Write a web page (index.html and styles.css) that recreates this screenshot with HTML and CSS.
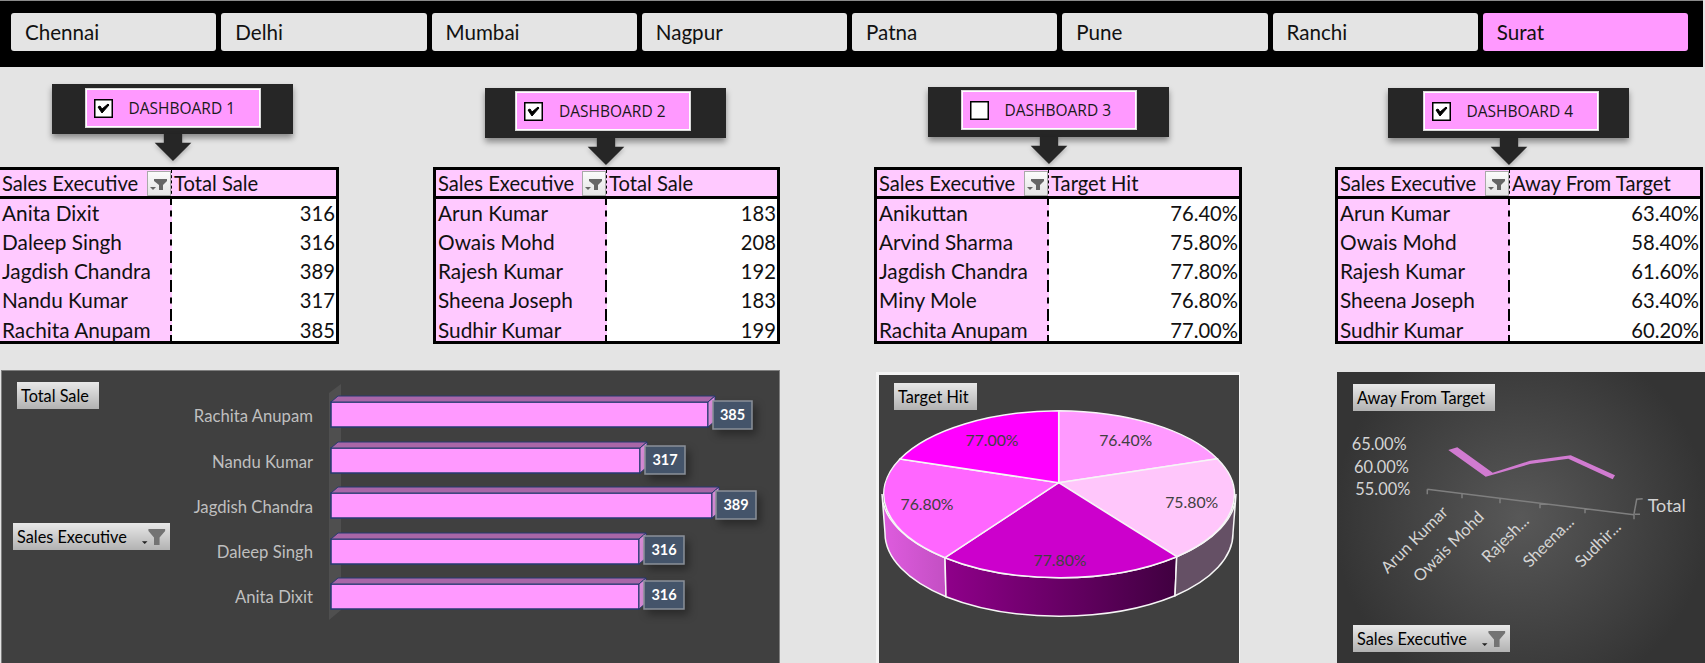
FILE: index.html
```html
<!DOCTYPE html>
<html lang="en">
<head>
    <meta charset="UTF-8">
    <meta name="viewport" content="width=device-width, initial-scale=1.0">
    <title>Sales Dashboard</title>
    <link rel="stylesheet" href="styles.css">
</head>
<body>
    <!-- City slicer -->
    <div class="slicer">
        <div class="slicer-item">Chennai</div>
        <div class="slicer-item">Delhi</div>
        <div class="slicer-item">Mumbai</div>
        <div class="slicer-item">Nagpur</div>
        <div class="slicer-item">Patna</div>
        <div class="slicer-item">Pune</div>
        <div class="slicer-item">Ranchi</div>
        <div class="slicer-item active">Surat</div>
    </div>

    <div class="sheet">
        <!-- Dashboard 1 -->
        <section class="col col-1">
            <div class="callout-area">
                <div class="callout">
                    <div class="callout-box">
                        <div class="toggle">
                            <svg class="check" viewBox="0 0 19 19"><rect x="0.75" y="0.75" width="17.5" height="17.5" fill="#fff" stroke="#000" stroke-width="1.5"/><polygon points="4,8 6,7 8,10 14,5 15,6 8,14"/></svg>
                            <span>DASHBOARD 1</span>
                        </div>
                    </div>
                    <svg class="arrow" viewBox="0 0 38 28"><path d="M9.5 0h19v9h9.5L19 28 0 9h9.5z" fill="#262626"/></svg>
                </div>
            </div>
            <table class="pivot">
                <tr>
                    <th class="name-col"><div class="th-inner">Sales Executive<span class="filter-btn"><svg viewBox="0 0 22 23"><path d="M6 7h13v2l-4 4v5h-4v-5l-5-4z" fill="#666"/><path d="M2 15h6l-3 3z" fill="#666"/></svg></span></div></th>
                    <th>Total Sale</th>
                </tr>
                <tr><td class="name-col">Anita Dixit</td><td class="num">316</td></tr>
                <tr><td class="name-col">Daleep Singh</td><td class="num">316</td></tr>
                <tr><td class="name-col">Jagdish Chandra</td><td class="num">389</td></tr>
                <tr><td class="name-col">Nandu Kumar</td><td class="num">317</td></tr>
                <tr><td class="name-col">Rachita Anupam</td><td class="num">385</td></tr>
            </table>
        </section>

        <!-- Dashboard 2 -->
        <section class="col col-2">
            <div class="callout-area">
                <div class="callout">
                    <div class="callout-box">
                        <div class="toggle">
                            <svg class="check" viewBox="0 0 19 19"><rect x="0.75" y="0.75" width="17.5" height="17.5" fill="#fff" stroke="#000" stroke-width="1.5"/><polygon points="4,8 6,7 8,10 14,5 15,6 8,14"/></svg>
                            <span>DASHBOARD 2</span>
                        </div>
                    </div>
                    <svg class="arrow" viewBox="0 0 38 28"><path d="M9.5 0h19v9h9.5L19 28 0 9h9.5z" fill="#262626"/></svg>
                </div>
            </div>
            <table class="pivot">
                <tr>
                    <th class="name-col"><div class="th-inner">Sales Executive<span class="filter-btn"><svg viewBox="0 0 22 23"><path d="M6 7h13v2l-4 4v5h-4v-5l-5-4z" fill="#666"/><path d="M2 15h6l-3 3z" fill="#666"/></svg></span></div></th>
                    <th>Total Sale</th>
                </tr>
                <tr><td class="name-col">Arun Kumar</td><td class="num">183</td></tr>
                <tr><td class="name-col">Owais Mohd</td><td class="num">208</td></tr>
                <tr><td class="name-col">Rajesh Kumar</td><td class="num">192</td></tr>
                <tr><td class="name-col">Sheena Joseph</td><td class="num">183</td></tr>
                <tr><td class="name-col">Sudhir Kumar</td><td class="num">199</td></tr>
            </table>
        </section>

        <!-- Dashboard 3 -->
        <section class="col col-3">
            <div class="callout-area">
                <div class="callout">
                    <div class="callout-box">
                        <div class="toggle">
                            <svg class="check" viewBox="0 0 19 19"><rect x="0.75" y="0.75" width="17.5" height="17.5" fill="#fff" stroke="#000" stroke-width="1.5"/></svg>
                            <span>DASHBOARD 3</span>
                        </div>
                    </div>
                    <svg class="arrow" viewBox="0 0 38 28"><path d="M9.5 0h19v9h9.5L19 28 0 9h9.5z" fill="#262626"/></svg>
                </div>
            </div>
            <table class="pivot">
                <tr>
                    <th class="name-col"><div class="th-inner">Sales Executive<span class="filter-btn"><svg viewBox="0 0 22 23"><path d="M6 7h13v2l-4 4v5h-4v-5l-5-4z" fill="#666"/><path d="M2 15h6l-3 3z" fill="#666"/></svg></span></div></th>
                    <th>Target Hit</th>
                </tr>
                <tr><td class="name-col">Anikuttan</td><td class="num">76.40%</td></tr>
                <tr><td class="name-col">Arvind Sharma</td><td class="num">75.80%</td></tr>
                <tr><td class="name-col">Jagdish Chandra</td><td class="num">77.80%</td></tr>
                <tr><td class="name-col">Miny Mole</td><td class="num">76.80%</td></tr>
                <tr><td class="name-col">Rachita Anupam</td><td class="num">77.00%</td></tr>
            </table>
        </section>

        <!-- Dashboard 4 -->
        <section class="col col-4">
            <div class="callout-area">
                <div class="callout">
                    <div class="callout-box">
                        <div class="toggle">
                            <svg class="check" viewBox="0 0 19 19"><rect x="0.75" y="0.75" width="17.5" height="17.5" fill="#fff" stroke="#000" stroke-width="1.5"/><polygon points="4,8 6,7 8,10 14,5 15,6 8,14"/></svg>
                            <span>DASHBOARD 4</span>
                        </div>
                    </div>
                    <svg class="arrow" viewBox="0 0 38 28"><path d="M9.5 0h19v9h9.5L19 28 0 9h9.5z" fill="#262626"/></svg>
                </div>
            </div>
            <table class="pivot">
                <tr>
                    <th class="name-col"><div class="th-inner">Sales Executive<span class="filter-btn"><svg viewBox="0 0 22 23"><path d="M6 7h13v2l-4 4v5h-4v-5l-5-4z" fill="#666"/><path d="M2 15h6l-3 3z" fill="#666"/></svg></span></div></th>
                    <th>Away From Target</th>
                </tr>
                <tr><td class="name-col">Arun Kumar</td><td class="num">63.40%</td></tr>
                <tr><td class="name-col">Owais Mohd</td><td class="num">58.40%</td></tr>
                <tr><td class="name-col">Rajesh Kumar</td><td class="num">61.60%</td></tr>
                <tr><td class="name-col">Sheena Joseph</td><td class="num">63.40%</td></tr>
                <tr><td class="name-col">Sudhir Kumar</td><td class="num">60.20%</td></tr>
            </table>
        </section>

        <!-- Bar chart -->
        <div class="chart chart-bar">
            <div class="field-btn total-btn">Total Sale</div>
            <div class="field-btn exec-btn">Sales Executive
                <svg class="field-icon" viewBox="0 0 28 19"><path d="M8 1h18v2l-6 7v8h-6v-8l-6-7z" fill="#737373"/><path d="M1 14h6l-3 3z" fill="#222"/></svg>
            </div>
            <svg class="plot" viewBox="0 0 777 292">
                <polygon points="339,13 327,22 327,249 339,239" fill="#4f4f4f"/>
                <g class="axis-names">
                    <text x="311" y="51">Rachita Anupam</text>
                    <text x="311" y="97">Nandu Kumar</text>
                    <text x="311" y="142">Jagdish Chandra</text>
                    <text x="311" y="187">Daleep Singh</text>
                    <text x="311" y="232">Anita Dixit</text>
                </g>
                <!-- bars: front, top, side -->
                <g class="bar">
                    <rect class="bar-front" x="329" y="31" width="377" height="25"/>
                    <polygon class="bar-top" points="329,31 336,25 713,25 706,31"/>
                    <polygon class="bar-side" points="706,31 713,25 713,50 706,56"/>
                    <rect class="bar-label" x="711" y="30" width="39" height="28"/>
                    <text x="730.5" y="49">385</text>
                </g>
                <g class="bar">
                    <rect class="bar-front" x="329" y="77" width="309" height="25"/>
                    <polygon class="bar-top" points="329,77 336,71 645,71 638,77"/>
                    <polygon class="bar-side" points="638,77 645,71 645,96 638,102"/>
                    <rect class="bar-label" x="643" y="75" width="40" height="28"/>
                    <text x="663" y="94">317</text>
                </g>
                <g class="bar">
                    <rect class="bar-front" x="329" y="122" width="381" height="25"/>
                    <polygon class="bar-top" points="329,122 336,116 717,116 710,122"/>
                    <polygon class="bar-side" points="710,122 717,116 717,141 710,147"/>
                    <rect class="bar-label" x="714" y="120" width="40" height="28"/>
                    <text x="734" y="139">389</text>
                </g>
                <g class="bar">
                    <rect class="bar-front" x="329" y="168" width="308" height="25"/>
                    <polygon class="bar-top" points="329,168 336,162 644,162 637,168"/>
                    <polygon class="bar-side" points="637,168 644,162 644,187 637,193"/>
                    <rect class="bar-label" x="642" y="165" width="40" height="28"/>
                    <text x="662" y="184">316</text>
                </g>
                <g class="bar">
                    <rect class="bar-front" x="329" y="213" width="308" height="25"/>
                    <polygon class="bar-top" points="329,213 336,207 644,207 637,213"/>
                    <polygon class="bar-side" points="637,213 644,207 644,232 637,238"/>
                    <rect class="bar-label" x="642" y="210" width="40" height="28"/>
                    <text x="662" y="229">316</text>
                </g>
            </svg>
        </div>

        <!-- Pie chart -->
        <div class="chart chart-pie">
            <div class="field-btn target-btn">Target Hit</div>
            <svg class="plot" viewBox="0 0 360 288">
                <defs>
                    <linearGradient id="sideLeft" x1="0" x2="1" y1="0" y2="0">
                        <stop offset="0" stop-color="#df5cdf"/>
                        <stop offset="1" stop-color="#c34fc3"/>
                    </linearGradient>
                    <linearGradient id="sideMid" x1="0" x2="1" y1="0" y2="0">
                        <stop offset="0" stop-color="#8f008a"/>
                        <stop offset="1" stop-color="#400040"/>
                    </linearGradient>
                </defs>
                <g class="pie-edge">
                    <path fill="url(#sideLeft)" d="M3,119 A177,84 0 0 0 66,182.7 L67,221.7 A177,84 0 0 1 6,158 Z"/>
                    <path fill="url(#sideMid)" d="M66,182.7 A177,84 0 0 0 297.7,181.7 L296,220.7 A177,84 0 0 1 67,221.7 Z"/>
                    <path fill="#655065" d="M297.7,181.7 A177,84 0 0 0 357,119 L354,158 A177,84 0 0 1 296,220.7 Z"/>
                    <path fill="#ff99ff" d="M179.7,107.7 L179.7,35.7 A177,84 0 0 1 338.3,83.7 Z"/>
                    <path fill="#ffc6fb" d="M179.7,107.7 L338.3,83.7 A177,84 0 0 1 297.7,181.7 Z"/>
                    <path fill="#cc00cc" d="M179.7,107.7 L297.7,181.7 A177,84 0 0 1 66,182.7 Z"/>
                    <path fill="#ff66ff" d="M179.7,107.7 L66,182.7 A177,84 0 0 1 21,84 Z"/>
                    <path fill="#ff00ff" d="M179.7,107.7 L21,84 A177,84 0 0 1 179.7,35.7 Z"/>
                </g>
                <g class="pie-labels">
                    <text x="246.7" y="71">76.40%</text>
                    <text x="312.7" y="133">75.80%</text>
                    <text x="181" y="191">77.80%</text>
                    <text x="48" y="135">76.80%</text>
                    <text x="113" y="71">77.00%</text>
                </g>
            </svg>
        </div>

        <!-- Line chart -->
        <div class="chart chart-line">
            <div class="field-btn away-btn">Away From Target</div>
            <div class="field-btn exec-btn-2">Sales Executive
                <svg class="field-icon" viewBox="0 0 28 19"><path d="M8 1h18v2l-6 7v8h-6v-8l-6-7z" fill="#737373"/><path d="M1 14h6l-3 3z" fill="#222"/></svg>
            </div>
            <svg class="plot" viewBox="0 0 368 291">
                <g class="line-text">
                    <text class="end" x="69.7" y="78">65.00%</text>
                    <text class="end" x="72" y="101">60.00%</text>
                    <text class="end" x="73.3" y="123">55.00%</text>
                    <text class="total-label" x="310.7" y="140">Total</text>
                    <text class="end" transform="translate(112,141) rotate(-45)">Arun Kumar</text>
                    <text class="end" transform="translate(148,146) rotate(-45)">Owais Mohd</text>
                    <text class="end" transform="translate(193,150) rotate(-45)">Rajesh...</text>
                    <text class="end" transform="translate(238,151) rotate(-45)">Sheena...</text>
                    <text class="end" transform="translate(285,156) rotate(-45)">Sudhir...</text>
                </g>
                <path class="axis" d="M90.3,117.3 L297,142.7 M90.3,117.3 V122.3 M125,122.3 V126.3 M163,127 V131.3 M203,131.7 V136.3 M248,137 V141.3 M297,142.3 V147.3 M298,142.3 H303 M297,142 L299.7,127.3 L305.7,126.7"/>
                <polygon fill="#d17bd1" points="111.3,78 120.3,75.3 155.7,100.7 193,88.7 233.7,83.3 278,103.3 275.7,107.3 231.3,86.7 193,92 148.7,104.7"/>
            </svg>
        </div>
    </div>
</body>
</html>
```

FILE: styles.css
```css
html, body {
    margin: 0;
    height: 663px;
    overflow: hidden;
    background: #e4e4e4;
    font-family: Lato, "Liberation Sans", sans-serif;
}

.slicer {
    display: flex;
    gap: 5px;
    width: 1703px;
    height: 66px;
    box-sizing: border-box;
    margin-top: 1px;
    padding: 12px 15px 16px 11px;
    background: #000;
    box-shadow: 0 -1px 0 #8a8a8a;
}
.slicer-item {
    flex: 1;
    display: flex;
    align-items: center;
    padding-left: 14px;
    background: #e4e4e4;
    border-radius: 3px;
    font-size: 20.6px;
    color: #111;
}
.slicer-item.active {
    background: #ff99ff;
}

.sheet {
    display: grid;
    grid-template-columns: 433px 441px 461px 370px;
}

.callout-area {
    display: flex;
    align-items: flex-start;
    height: 100px;
}
.callout {
    display: flex;
    flex-direction: column;
    align-items: center;
    width: 241px;
}
.col-1 .callout { margin: 17px 0 0 52px; }
.col-2 .callout { margin: 21px 0 0 52px; }
.col-3 .callout { margin: 20px 0 0 54px; }
.col-4 .callout { margin: 21px 0 0 53px; }

.callout-box {
    display: flex;
    align-items: flex-start;
    justify-content: center;
    width: 100%;
    height: 50px;
    box-sizing: border-box;
    padding-top: 3px;
    background: #262626;
    box-shadow: 0 4px 6px rgba(0, 0, 0, 0.4);
}
.col-1 .callout-box { padding-top: 4px; }
.toggle {
    display: flex;
    align-items: center;
    gap: 16px;
    width: 176px;
    height: 40px;
    box-sizing: border-box;
    padding-left: 8px;
    background: #ff99ff;
    border: 1px solid #d8d8d8;
    outline: 1px solid #fff;
    outline-offset: -2px;
    font-family: "Open Sans", sans-serif;
    font-size: 15.5px;
    color: #1a1a1a;
    white-space: nowrap;
}
.col-2 .toggle { margin-right: 5px; }
.col-4 .toggle { margin-left: 4px; }
.check {
    flex: none;
    width: 19px;
    height: 19px;
}
.check polygon {
    stroke: #000;
    stroke-width: 1;
}
.arrow {
    width: 38px;
    height: 27px;
    filter: drop-shadow(0 2px 2px rgba(0, 0, 0, 0.25));
}

.pivot {
    table-layout: fixed;
    box-sizing: border-box;
    border: 3px solid #000;
    border-spacing: 0;
    background: #fff;
    font-size: 20.2px;
    color: #111;
}
.col-1 .pivot { width: 339px; border-left: 0; }
.col-2 .pivot { width: 347px; }
.col-3 .pivot { width: 368px; }
.col-4 .pivot { width: 368px; }

.col-1 .name-col { width: 169px; }
.col-2 .name-col { width: 168px; }
.col-3 .name-col { width: 169px; }
.col-4 .name-col { width: 169px; }

.pivot th, .pivot td {
    padding: 0 1px 0 2px;
    line-height: 1;
    white-space: nowrap;
}
.pivot th {
    height: 26px;
    background: #ffc9ff;
    border-bottom: 3px solid #000;
    font-weight: normal;
    text-align: left;
}
.pivot td {
    height: 29px;
}
/* last row is clipped by the table border, text stays on the row rhythm */
.pivot tr:last-child td {
    height: 22px;
    padding-top: 4px;
}
.pivot td.name-col {
    background: #ffc9ff;
    border-right: 2px dashed #000;
    font-size: 20.8px;
}
.pivot th.name-col {
    padding-right: 0;
    border-right: 1px dashed #000;
}
.th-inner {
    display: flex;
    align-items: center;
    justify-content: space-between;
}
.filter-btn {
    width: 24px;
    height: 25px;
    box-sizing: border-box;
    background: linear-gradient(#fbfbfb, #e4e4e4);
    border: 1px solid #a9a9a9;
}
.filter-btn svg {
    display: block;
    width: 22px;
    height: 23px;
}
.num {
    text-align: right;
}

.chart {
    position: relative;
    box-sizing: border-box;
    height: 293px;
    overflow: hidden;
    background: #404040;
}
.plot {
    display: block;
    width: 100%;
    height: 100%;
}
.chart-bar {
    grid-column: 1 / 3;
    width: 779px;
    margin: 26px 0 0 1px;
    border: 1px solid #7f7f7f;
    border-bottom: 0;
}
.chart-pie {
    width: 364px;
    height: 291px;
    margin: 28px 0 0 2px;
    border-top: 3px solid #f4f4f4;
    border-left: 3px solid #f4f4f4;
    border-right: 1px solid #f4f4f4;
}
.chart-line {
    width: 368px;
    height: 291px;
    margin: 28px 0 0 2px;
    background: radial-gradient(circle at 50% 50%, #585858, #343434 80%);
}

.field-btn {
    position: absolute;
    display: flex;
    align-items: center;
    height: 27px;
    box-sizing: border-box;
    padding-left: 4px;
    background: linear-gradient(#e8e8e8, #b2b2b2);
    font-size: 16.3px;
    color: #000;
    white-space: nowrap;
}
.field-icon {
    width: 26px;
    height: 18px;
    margin-left: auto;
    margin-right: 3px;
}
.total-btn { left: 15px; top: 11px; width: 82px; }
.exec-btn { left: 11px; top: 152px; width: 157px; }
.target-btn { left: 15px; top: 8px; width: 83px; }
.away-btn { left: 16px; top: 12px; width: 142px; }
.exec-btn-2 { left: 16px; top: 253px; width: 157px; }

.axis-names text {
    fill: #bfbfbf;
    font-size: 16.7px;
    text-anchor: end;
}
.bar-front {
    fill: #ff99ff;
    stroke: #263a70;
    stroke-width: 1.5;
}
.bar-top {
    fill: #a866a8;
    stroke: #263a70;
}
.bar-side {
    fill: #d98cd9;
    stroke: #263a70;
}
.bar-label {
    fill: #44546a;
    stroke: #8a9099;
    stroke-width: 1.5;
    filter: drop-shadow(4px 5px 4px rgba(0, 0, 0, 0.35));
}
.bar text {
    fill: #fff;
    font-size: 14.5px;
    font-weight: bold;
    text-anchor: middle;
}

.pie-edge path {
    stroke: #f6f6f6;
    stroke-width: 1.5;
}
.pie-labels text {
    fill: #404040;
    font-size: 15.8px;
    text-anchor: middle;
}

.line-text text {
    fill: #d4d4d4;
    font-size: 16.4px;
}
.line-text .end {
    text-anchor: end;
}
.line-text .total-label {
    font-size: 18px;
}
.axis {
    fill: none;
    stroke: #7f7f7f;
    stroke-width: 1.5;
}
```
